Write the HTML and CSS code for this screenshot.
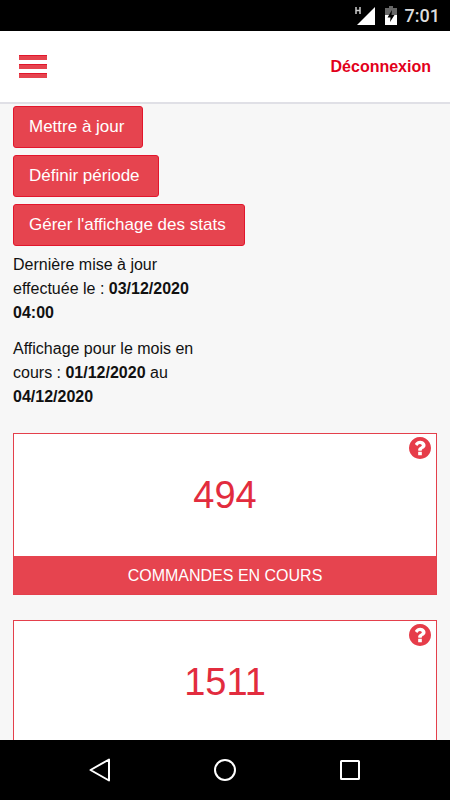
FILE: index.html
```html
<!DOCTYPE html>
<html lang="fr">
<head>
<meta charset="utf-8">
<meta name="viewport" content="width=device-width, initial-scale=1">
<title>Statistiques</title>
<link rel="stylesheet" href="styles.css">
</head>
<body>
<svg class="defs" aria-hidden="true">
  <symbol id="help" viewBox="128 128 1536 1536">
    <path d="M1024 1376v-192q0-14-9-23t-23-9h-192q-14 0-23 9t-9 23v192q0 14 9 23t23 9h192q14 0 23-9t9-23zm256-672q0-88-55.500-163t-138.500-116-170-41q-243 0-371 213-15 24 8 42l132 100q7 6 19 6 16 0 25-12 53-68 86-92 34-24 86-24 48 0 85.500 26t37.500 59q0 38-20 61t-68 45q-63 28-115.500 86.500t-52.500 125.500v36q0 14 9 23t23 9h192q14 0 23-9t9-23q0-19 21.500-49.500t54.500-49.500q32-18 49-28.500t46-35 44.500-48 28-60.500 12.500-81zm384 192q0 209-103 385.500t-279.500 279.500-385.500 103-385.500-103-279.500-279.500-103-385.500 103-385.500 279.500-279.500 385.500-103 385.500 103 279.500 279.500 103 385.500z"/>
  </symbol>
</svg>
<div class="status">
  <svg class="signal" width="22" height="20" viewBox="0 0 22 20" aria-hidden="true">
    <path d="M21 1V19H3z" fill="#fff"/>
    <path d="M2 1v7M6 1v7M2 4.500h4" stroke="#ccc" stroke-width="1.500" fill="none"/>
  </svg>
  <svg class="battery" width="12" height="20" viewBox="0 0 12 20" aria-hidden="true">
    <path d="M4 0h4v2h4v7H0V2h4z" fill="#666"/>
    <path d="M0 9h12v10H0z" fill="#fff"/>
    <path d="M7 4L2.500 11.500h3L5 16l4.500-7H6.500z" fill="#000"/>
  </svg>
  <span class="clock">7:01</span>
</div>
<header class="topbar">
  <button class="menu" type="button" aria-label="Menu">
    <span class="bar"></span><span class="bar"></span><span class="bar"></span>
  </button>
  <a class="logout" href="#">Déconnexion</a>
</header>
<main class="content">
  <div class="actions">
    <button class="btn" type="button">Mettre à jour</button>
    <button class="btn" type="button">Définir période</button>
    <button class="btn" type="button">Gérer l'affichage des stats</button>
  </div>
  <div class="info">
    <p>Dernière mise à jour effectuée le : <b>03/12/2020 04:00</b></p>
    <p>Affichage pour le mois en cours : <b>01/12/2020</b> au <b>04/12/2020</b></p>
  </div>
  <section class="card">
    <button class="help" type="button" aria-label="Aide"><svg width="22" height="22"><use href="#help"/></svg></button>
    <div class="value">494</div>
    <h2 class="label">COMMANDES EN COURS</h2>
  </section>
  <section class="card">
    <button class="help" type="button" aria-label="Aide"><svg width="22" height="22"><use href="#help"/></svg></button>
    <div class="value">1511</div>
  </section>
</main>
<nav class="navbar">
  <button type="button" aria-label="Retour"><svg width="24" height="24" viewBox="0 0 24 24"><path d="M21 1.500v21L2.500 12z"/></svg></button>
  <button type="button" aria-label="Accueil"><svg width="24" height="24" viewBox="0 0 24 24"><circle cx="12" cy="12" r="10"/></svg></button>
  <button type="button" aria-label="Applications"><svg width="24" height="24" viewBox="0 0 24 24"><rect x="3" y="3" width="18" height="18" rx="0.500"/></svg></button>
</nav>
</body>
</html>
```
FILE: styles.css
```css
* {
  box-sizing: border-box;
}

body {
  margin: 0;
  height: 100vh;
  display: flex;
  flex-direction: column;
  background: #f7f7f7;
  color: #111;
  font: 16px/24px "Liberation Sans", Arial, sans-serif;
}

button {
  margin: 0;
  padding: 0;
  border: 0;
  background: none;
  font: inherit;
  cursor: pointer;
}

svg {
  display: block;
}

.defs {
  position: absolute;
  width: 0;
  height: 0;
}

.status {
  flex: none;
  display: flex;
  align-items: center;
  justify-content: flex-end;
  height: 31px;
  padding-right: 10px;
  background: #000;
}

.signal {
  margin-right: 9px;
}

.battery {
  margin-right: 8px;
}

.clock {
  color: #ddd;
  font: 500 18px/31px Roboto, sans-serif;
}

.topbar {
  flex: none;
  display: flex;
  align-items: center;
  justify-content: space-between;
  height: 73px;
  padding: 0 19px;
  background: #fff;
  border-bottom: 2px solid #e0e0e6;
}

.menu {
  display: flex;
  flex-direction: column;
  gap: 4px;
}

.bar {
  width: 28px;
  height: 5px;
  background: #e6444f;
  border-top: 1px solid #e2162c;
}

.logout {
  color: #e2001a;
  font-weight: bold;
  text-decoration: none;
}

.content {
  flex: 1;
  min-height: 0;
  overflow: hidden;
  padding: 2px 13px 0;
}

.actions {
  display: flex;
  flex-direction: column;
  align-items: flex-start;
  gap: 7px;
}

.btn {
  height: 42px;
  padding: 0 18px 0 15px;
  border: 1px solid #e2162c;
  border-radius: 3px;
  background: #e6444f;
  color: #fff;
  font-size: 17px;
}

.info {
  width: 50%;
  padding-top: 7px;
}

.info p {
  margin: 0 0 12px;
}

.info p:last-child {
  margin: 0;
}

.card {
  position: relative;
  margin-bottom: 25px;
  border: 1px solid #e4404c;
  background: #fff;
}

.info + .card {
  margin-top: 24px;
}

.help {
  position: absolute;
  top: 3px;
  right: 5px;
}

.help svg {
  fill: #e63c49;
}

.value {
  color: #e22c3e;
  font-size: 38px;
  line-height: 122px;
  text-align: center;
}

.label {
  margin: 0;
  padding-top: 2px;
  background: #e6444f;
  color: #fff;
  font-size: 16px;
  font-weight: normal;
  line-height: 36px;
  text-align: center;
}

.navbar {
  flex: none;
  display: flex;
  align-items: center;
  justify-content: center;
  gap: 101px;
  height: 60px;
  background: #000;
}

.navbar svg {
  fill: none;
  stroke: #fff;
  stroke-width: 2;
  stroke-linejoin: round;
}
```
